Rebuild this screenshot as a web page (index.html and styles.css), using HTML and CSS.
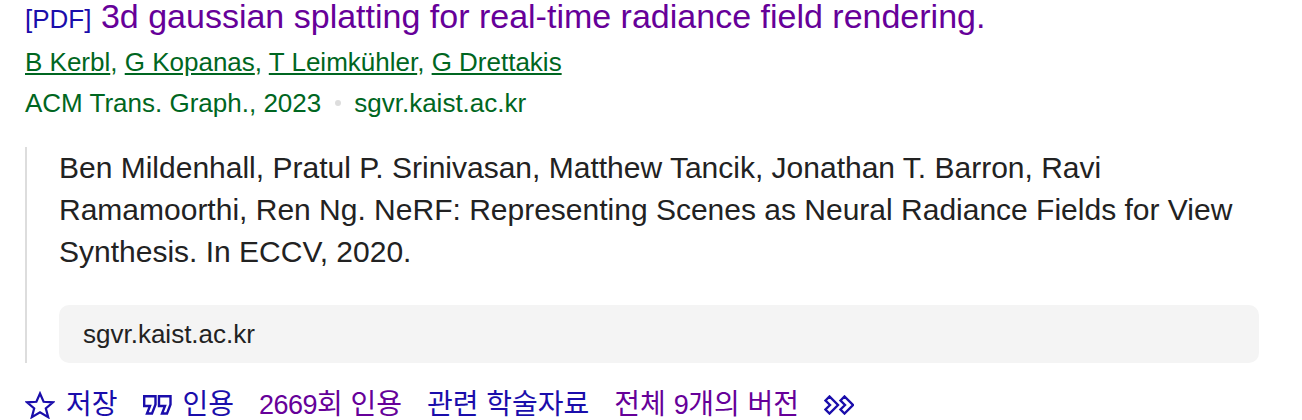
FILE: index.html
```html
<!DOCTYPE html>
<html lang="ko">
	<head>
		<meta charset="utf-8">
		<link rel="stylesheet" href="styles.css">
	</head>
	<body>
		<div class="result">
			<h3 class="title">
				<span class="tag">[PDF]</span>
				<a href="#" class="visited">3d gaussian splatting for real-time radiance field rendering.</a>
			</h3>
			<div class="authors"><a href="#">B Kerbl</a>, <a href="#">G Kopanas</a>, <a href="#">T Leimkühler</a>, <a href="#">G Drettakis</a></div>
			<div class="source">ACM Trans. Graph., 2023<span class="dot"></span>sgvr.kaist.ac.kr</div>

			<div class="snippet">
				<p>Ben Mildenhall, Pratul P. Srinivasan, Matthew Tancik, Jonathan T. Barron, Ravi Ramamoorthi, Ren Ng. NeRF: Representing Scenes as Neural Radiance Fields for View Synthesis. In ECCV, 2020.</p>
				<div class="site">sgvr.kaist.ac.kr</div>
			</div>

			<div class="actions">
				<a href="#" class="action">
					<svg viewBox="0 0 30 28" width="30" height="28"><path d="M15 2.5 L18.6 10.8 L28 11.3 L20.8 17.4 L23.2 26.2 L15 21.3 L6.8 26.2 L9.2 17.4 L2 11.3 L11.4 10.8 Z" fill="none" stroke="currentColor" stroke-width="2.2"/></svg>
					저장
				</a>
				<a href="#" class="action">
					<svg viewBox="0 0 29 20" width="29" height="20"><path d="M1.2 1.2 H12.5 V9.5 L9 18.5 H4 L7 11 H1.2 Z M16 1.2 H27.5 V9.5 L24 18.5 H19 L22 11 H16 Z" fill="none" stroke="currentColor" stroke-width="2.4"/></svg>
					인용
				</a>
				<a href="#" class="action visited"><span><span class="num">2669</span>회 인용</span></a>
				<a href="#" class="action">관련 학술자료</a>
				<a href="#" class="action visited"><span>전체 <span class="num">9</span>개의 버전</span></a>
				<a href="#" class="action">
					<svg viewBox="0 0 30 20" width="30" height="20"><path d="M1.5 5.5 L5.5 1.5 L14 10 L5.5 18.5 L1.5 14.5 L6 10 Z M16.5 5.5 L20.5 1.5 L29 10 L20.5 18.5 L16.5 14.5 L21 10 Z" fill="none" stroke="currentColor" stroke-width="2.4"/></svg>
				</a>
			</div>
		</div>
	</body>
</html>
```

FILE: styles.css
```css
body {
	margin: 0;
	background: #fff;
	font-family: "Liberation Sans", "Noto Sans CJK KR", sans-serif;
	color: #222;
	overflow: hidden;
}

a {
	color: inherit;
	text-decoration: none;
}

.result {
	padding-left: 25px;
	width: 1234px;
}

.title {
	margin: 0;
	font-size: 34px;
	font-weight: normal;
	line-height: 32px;
	white-space: nowrap;
}
.tag {
	font-size: 26px;
	color: #1a0dab;
}
.visited {
	color: #660099;
}

.authors,
.source {
	font-size: 26px;
	line-height: 41px;
	color: #006621;
}
.authors {
	margin-top: 7px;
}
.authors a {
	text-decoration: underline;
}

.dot {
	display: inline-block;
	width: 6px;
	height: 6px;
	border-radius: 50%;
	background: #ddd;
	margin: 0 13px 0 14px;
	vertical-align: 6px;
}

.snippet {
	margin-top: 23px;
	border-left: 2px solid #ddd;
	padding-left: 32px;
}
.snippet p {
	margin: 0;
	font-size: 30px;
	line-height: 42px;
}
.site {
	margin-top: 32px;
	background: #f4f4f4;
	border-radius: 10px;
	height: 58px;
	line-height: 58px;
	padding-left: 24px;
	font-size: 26px;
}

.actions {
	display: flex;
	align-items: center;
	gap: 25px;
	margin-top: 22px;
	font-size: 28px;
	line-height: 40px;
	white-space: nowrap;
	color: #1a0dab;
}
.action {
	display: flex;
	align-items: center;
	gap: 11px;
}
.action.visited {
	color: #660099;
}
.num {
	font-size: 27px;
	letter-spacing: -0.55px;
}
```
